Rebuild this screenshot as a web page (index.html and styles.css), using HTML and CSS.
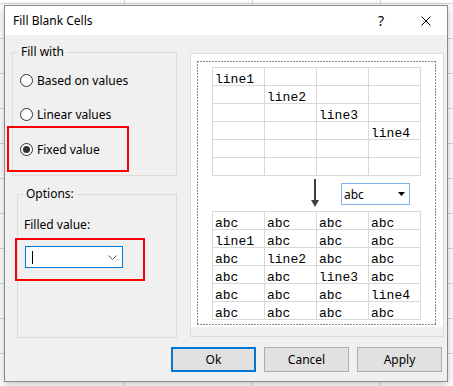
FILE: index.html
```html
<!DOCTYPE html>
<html lang="en">
<head>
    <meta charset="UTF-8">
    <title>Fill Blank Cells</title>
    <link rel="stylesheet" href="styles.css">
</head>
<body>
    <div class="dialog">
        <!-- Barra de título -->
        <div class="titlebar">
            <span class="title">Fill Blank Cells</span>
            <span class="help">?</span>
            <span class="close">
                <svg width="10" height="10" viewBox="0 0 10 10"><path d="M0.5 0.5 L9.5 9.5 M9.5 0.5 L0.5 9.5" stroke="#000" stroke-width="1"/></svg>
            </span>
        </div>

        <div class="main">
            <div class="left">
                <fieldset class="group fill-group">
                    <legend>Fill with</legend>
                    <label class="radio"><span class="circle"></span>Based on values</label>
                    <label class="radio second"><span class="circle"></span>Linear values</label>
                    <label class="radio highlight fixed-row"><span class="circle checked"></span>Fixed value</label>
                </fieldset>

                <fieldset class="group options-group">
                    <legend>Options:</legend>
                    <div class="field-label">Filled value:</div>
                    <div class="highlight combo-wrap">
                        <div class="combo">
                            <span class="caret"></span>
                            <svg class="chevron" width="9" height="5" viewBox="0 0 9 5"><path d="M0.5 0.5 L4.5 4.5 L8.5 0.5" fill="none" stroke="#555" stroke-width="1"/></svg>
                        </div>
                    </div>
                </fieldset>
            </div>

            <!-- Vista previa -->
            <div class="preview">
                <div class="canvas">
                    <div class="dashed">
                        <table class="grid">
                            <tr><td>line1</td><td></td><td></td><td></td></tr>
                            <tr><td></td><td>line2</td><td></td><td></td></tr>
                            <tr><td></td><td></td><td>line3</td><td></td></tr>
                            <tr><td></td><td></td><td></td><td>line4</td></tr>
                            <tr><td></td><td></td><td></td><td></td></tr>
                            <tr><td></td><td></td><td></td><td></td></tr>
                        </table>

                        <div class="middle">
                            <svg class="arrow" width="8" height="28" viewBox="0 0 8 28">
                                <rect x="3" y="0" width="2" height="22" fill="#404040"/>
                                <polygon points="0,21 8,21 4,28" fill="#404040"/>
                            </svg>
                            <div class="mini-combo">
                                <span>abc</span>
                                <svg width="7" height="4" viewBox="0 0 7 4"><polygon points="0,0 7,0 3.5,4" fill="#000"/></svg>
                            </div>
                        </div>

                        <table class="grid">
                            <tr><td>abc</td><td>abc</td><td>abc</td><td>abc</td></tr>
                            <tr><td>line1</td><td>abc</td><td>abc</td><td>abc</td></tr>
                            <tr><td>abc</td><td>line2</td><td>abc</td><td>abc</td></tr>
                            <tr><td>abc</td><td>abc</td><td>line3</td><td>abc</td></tr>
                            <tr><td>abc</td><td>abc</td><td>abc</td><td>line4</td></tr>
                            <tr><td>abc</td><td>abc</td><td>abc</td><td>abc</td></tr>
                        </table>
                    </div>
                </div>
            </div>
        </div>

        <!-- Botones -->
        <div class="buttons">
            <button class="ok">Ok</button>
            <button>Cancel</button>
            <button>Apply</button>
        </div>
    </div>
</body>
</html>
```

FILE: styles.css
```css
/* Hoja de cálculo de fondo */
* {
    box-sizing: border-box;
}

body {
    margin: 0;
    height: 386px;
    overflow: hidden;
    font-family: "Noto Sans", sans-serif;
    font-size: 12px;
    color: #000;
    background-color: #fff;
    background-image: linear-gradient(#d6d6d6 1px, transparent 1px), linear-gradient(90deg, #d6d6d6 1px, transparent 1px);
    background-size: 100% 35px, 128px 100%;
    background-position: 0 3px, -4px 0;
}

.dialog {
    display: flex;
    flex-direction: column;
    width: 444px;
    height: 377px;
    margin: 5px 0 0 4px;
    border: 1px solid #8a8a8a;
    background-color: #f0f0f0;
    box-shadow: 0 2px 8px rgba(0, 0, 0, 0.25);
}

.titlebar {
    display: flex;
    align-items: center;
    height: 29px;
    padding: 0 15px 0 8px;
    background-color: #fff;
}

.title {
    flex: 1;
}

.help {
    width: 12px;
    margin-right: 33px;
    text-align: center;
    font-size: 14px;
}

.close {
    display: flex;
    justify-content: center;
    width: 12px;
}

.main {
    display: flex;
    padding: 9px 0 0 7px;
}

.left {
    display: flex;
    flex-direction: column;
    width: 165px;
}

.group {
    margin: 0;
    min-width: 0;
    border: 1px solid #dcdcdc;
}

legend {
    padding: 0 3px;
    line-height: 16px;
}

.fill-group {
    width: 165px;
    padding: 9px 0 3px 7px;
}

.fill-group legend {
    margin-left: -2px;
}

.radio {
    display: flex;
    align-items: center;
    gap: 4px;
    height: 22px;
}

.radio.second {
    margin-top: 12px;
}

.circle {
    position: relative;
    width: 13px;
    height: 13px;
    border: 1px solid #333;
    border-radius: 50%;
    background-color: #fff;
}

.circle.checked::after {
    content: "";
    position: absolute;
    left: 2px;
    top: 2px;
    width: 7px;
    height: 7px;
    border-radius: 50%;
    background-color: #333;
}

.highlight {
    border: 2px solid #f00;
}

.fixed-row {
    width: 122px;
    height: 46px;
    margin: 1px 0 0 -13px;
    padding-left: 11px;
}

.options-group {
    width: 160px;
    height: 152px;
    margin: 10px 0 0 5px;
    padding: 15px 0 0 6px;
}

.options-group legend {
    padding: 0 2px;
}

.field-label {
    line-height: 16px;
}

.combo-wrap {
    width: 130px;
    height: 43px;
    margin: 5px 0 0 -9px;
    padding: 6px 0 0 8px;
}

.combo {
    display: flex;
    align-items: center;
    justify-content: space-between;
    width: 98px;
    height: 22px;
    padding: 0 5px 0 6px;
    border: 1px solid #0078d7;
    background-color: #fff;
}

.caret {
    width: 1px;
    height: 13px;
    background-color: #000;
}

.preview {
    width: 254px;
    height: 284px;
    margin: 9px 0 0 13px;
    border: 1px solid #dcdcdc;
}

.canvas {
    height: 273px;
    padding: 7px 0 0 6px;
    background-color: #fff;
}

.dashed {
    width: 239px;
    height: 264px;
    padding: 6px 0 0 15px;
    background-image:
        repeating-linear-gradient(90deg, #8a8a8a 0 2px, transparent 2px 3px),
        repeating-linear-gradient(90deg, #8a8a8a 0 2px, transparent 2px 3px),
        repeating-linear-gradient(#8a8a8a 0 2px, transparent 2px 3px),
        repeating-linear-gradient(#8a8a8a 0 2px, transparent 2px 3px);
    background-size: 100% 1px, 100% 1px, 1px 100%, 1px 100%;
    background-position: 0 0, 0 100%, 0 0, 100% 0;
    background-repeat: no-repeat;
}

.grid {
    width: 209px;
    border-collapse: collapse;
    table-layout: fixed;
    font-family: "Liberation Mono", monospace;
    font-size: 13px;
}

.grid td {
    padding: 6px 2px 0;
    line-height: 11px;
    border: 1px solid #d9d9d9;
    white-space: nowrap;
    overflow: hidden;
}

.grid td:empty::after {
    content: "\00a0";
}

.middle {
    display: flex;
    align-items: flex-start;
    height: 35px;
    padding-left: 99px;
}

.arrow {
    margin-top: 3px;
}

.mini-combo {
    display: flex;
    align-items: center;
    justify-content: space-between;
    width: 69px;
    height: 22px;
    margin: 7px 0 0 22px;
    padding: 0 4px 0 2px;
    border: 1px solid #7eb4ea;
    background-color: #fff;
}

.buttons {
    display: flex;
    justify-content: flex-end;
    gap: 8px;
    margin-top: 9px;
    padding-right: 5px;
}

button {
    width: 85px;
    height: 25px;
    padding: 0;
    border: 1px solid #adadad;
    background-color: #e1e1e1;
    font-family: inherit;
    font-size: 12px;
    color: #000;
}

button.ok {
    border: 2px solid #0078d7;
}
```
